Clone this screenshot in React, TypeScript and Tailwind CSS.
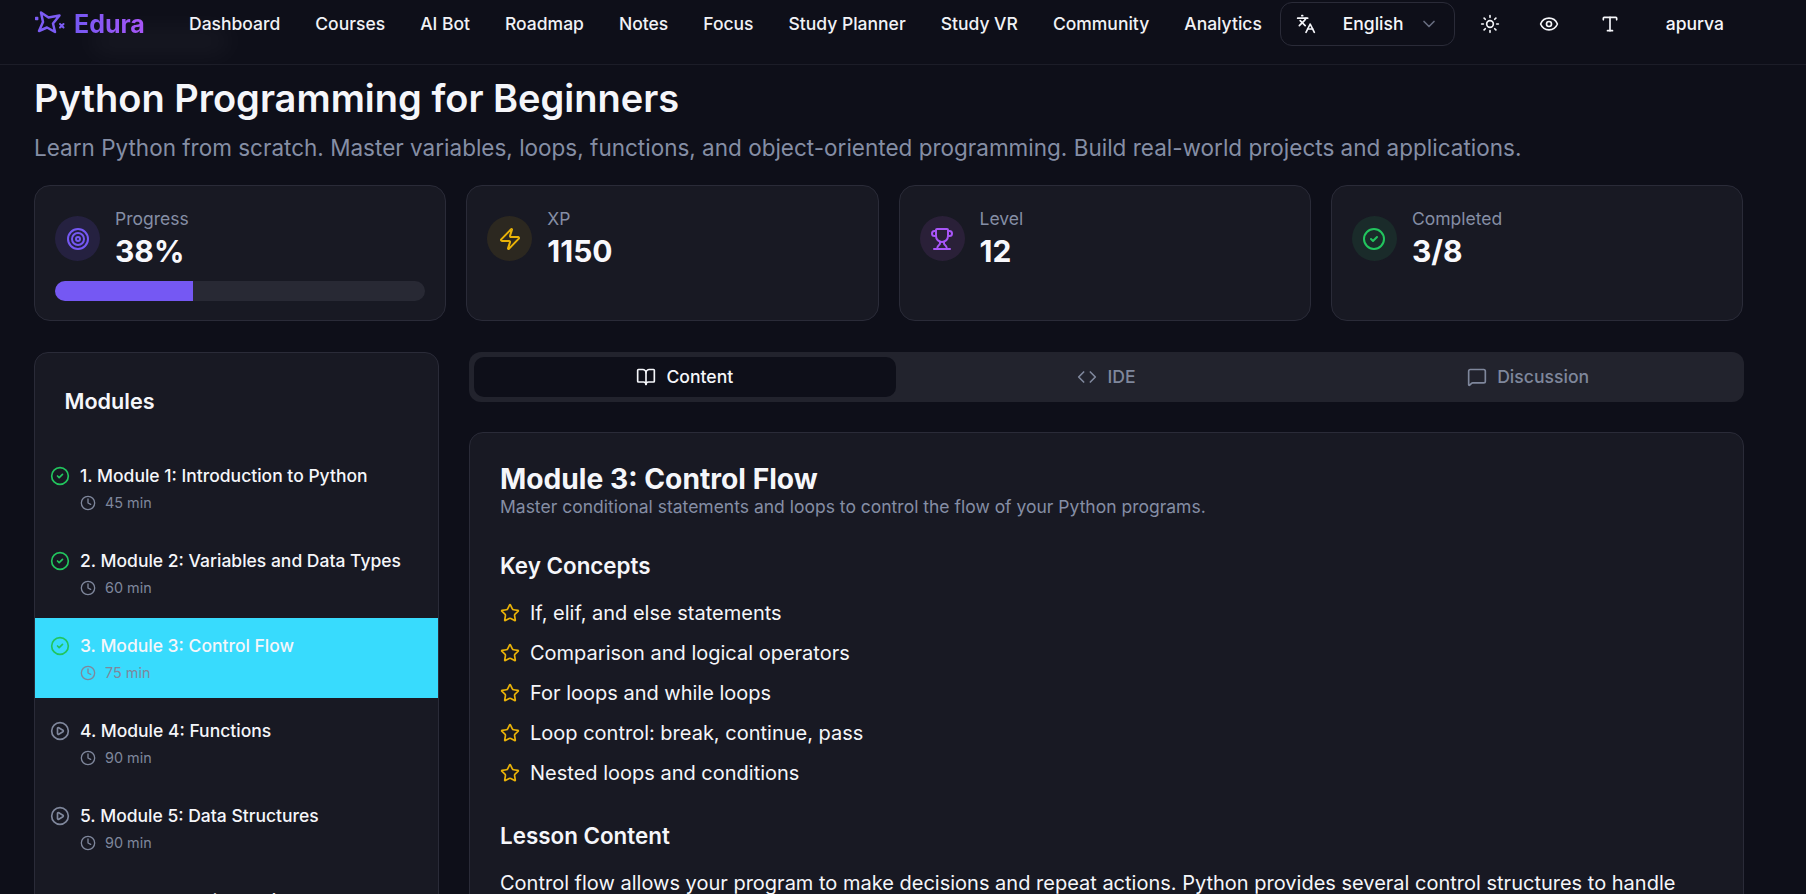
import { BookOpen, ChevronDown, CircleCheck, CirclePlay, Clock, Code, Eye, Languages, MessageSquare, Star, Sun, Target, Trophy, Type, Zap } from 'lucide-react';

const navLinks = ['Dashboard', 'Courses', 'AI Bot', 'Roadmap', 'Notes', 'Focus', 'Study Planner', 'Study VR', 'Community', 'Analytics'];

const modules = [
  { title: '1. Module 1: Introduction to Python', time: '45 min', done: true },
  { title: '2. Module 2: Variables and Data Types', time: '60 min', done: true },
  { title: '3. Module 3: Control Flow', time: '75 min', done: true, active: true },
  { title: '4. Module 4: Functions', time: '90 min' },
  { title: '5. Module 5: Data Structures', time: '90 min' },
  { title: '6. Module 6: Object-Oriented Programming', time: '120 min', long: true },
];

const concepts = [
  'If, elif, and else statements',
  'Comparison and logical operators',
  'For loops and while loops',
  'Loop control: break, continue, pass',
  'Nested loops and conditions',
];

const Logo = () => (
  <svg width="32" height="28" viewBox="0 0 32 28" fill="none" stroke="#7c5cf5" strokeWidth="2.5" strokeLinejoin="round" strokeLinecap="round">
    <path d="M7 2.5 L14.5 7.5 L25.5 5.5 L19 13.5 L21 22 L13 17.5 L5 21 L9 12 Z" />
    <rect x="1.7" y="7.5" width="2" height="2" fill="#7c5cf5" strokeWidth="1.4" />
    <path d="M26 14 L29.5 17.5 M29.5 14 L26 17.5" strokeWidth="2" />
  </svg>
);

const StatCard = ({ icon, tint, label, value, children }: { icon: React.ReactNode; tint: string; label: string; value: string; children?: React.ReactNode }) => (
  <div className="h-[136px] rounded-2xl border border-[#2a2b38] bg-[#181923] p-5">
    <div className="flex h-[65px] items-center gap-[15px]">
      <div className={`flex h-[45px] w-[45px] items-center justify-center rounded-full ${tint}`}>{icon}</div>
      <div>
        <div className="text-[17.5px] leading-[25px] text-[#858ea5]">{label}</div>
        <div className="text-[30px] font-bold leading-[40px] text-[#f8f8fc]">{value}</div>
      </div>
    </div>
    {children}
  </div>
);

export default function App() {
  return (
    <div className="relative h-screen overflow-hidden bg-[#0e0f19] font-['Inter',sans-serif] text-[#f5f6fa]">
      <div className="absolute left-[90px] top-[28px] h-[26px] w-[140px] rounded-full bg-[#ffffff0a] blur-[12px]" />
      <nav className="relative flex h-[65px] items-start justify-between border-b border-[#1c1d28] pl-[34px] pr-[82px] pt-[2px]">
        <div className="flex h-11 items-center">
          <div className="flex w-[155px] items-center gap-2">
            <Logo />
            <span className="bg-gradient-to-r from-[#7558f3] to-[#a855f7] bg-clip-text text-[25px] font-bold leading-8 text-transparent">Edura</span>
          </div>
          <div className="flex gap-[35px] text-[17.5px] font-medium text-[#f1f2f6]">
            {navLinks.map((link) => (
              <a key={link}>{link}</a>
            ))}
          </div>
        </div>
        <div className="flex h-11 items-center">
          <div className="flex h-11 w-[175px] items-center rounded-xl border border-[#2a2b38] pl-[15px] pr-[15px] text-[17.5px] font-medium">
            <Languages size={20} />
            <span className="ml-[27px] flex-1">English</span>
            <ChevronDown size={20} className="text-[#666c7e]" />
          </div>
          <Sun size={20} className="ml-[25px]" />
          <Eye size={20} className="ml-[39px]" />
          <Type size={20} className="ml-[41px]" />
          <span className="ml-[46px] text-[17.5px] font-medium">apurva</span>
        </div>
      </nav>

      <main className="relative pl-[34px] pr-[62px] pt-[13px]">
        <h1 className="text-[38px] font-semibold leading-10">Python Programming for Beginners</h1>
        <p className="mt-4 text-[22.5px] leading-7 text-[#858ea5]">
          Learn Python from scratch. Master variables, loops, functions, and object-oriented programming. Build real-world projects and applications.
        </p>

        <div className="mt-[23px] grid grid-cols-[repeat(4,412.3px)] gap-5">
          <StatCard icon={<Target size={24} className="text-[#7558f3]" />} tint="bg-[#252140]" label="Progress" value="38%">
            <div className="mt-[10px] h-5 overflow-hidden rounded-full bg-[#282934]">
              <div className="h-full w-[37.4%] bg-[#7558f3]" />
            </div>
          </StatCard>
          <StatCard icon={<Zap size={24} className="text-[#eab308]" />} tint="bg-[#2c2820]" label="XP" value="1150" />
          <StatCard icon={<Trophy size={24} className="text-[#a855f7]" />} tint="bg-[#2a2038]" label="Level" value="12" />
          <StatCard icon={<CircleCheck size={24} className="text-[#22c55e]" />} tint="bg-[#1a2b2a]" label="Completed" value="3/8" />
        </div>

        <div className="mt-[31px] flex gap-[30px]">
          <aside className="h-[800px] w-[405px] shrink-0 rounded-[14px] border border-[#2a2b38] bg-[#181923]">
            <h2 className="pl-[29.5px] pt-[34px] text-[21.6px] font-semibold leading-7">Modules</h2>
            <div className="mt-[33px] flex flex-col gap-[5px]">
              {modules.map((m) => {
                return (
                  <div key={m.title} className={`flex min-h-20 gap-[10px] pl-[15px] pr-4 pt-4 ${m.active ? 'bg-[#38dbfd]' : ''}`}>
                    <div className={`flex h-6 items-center ${m.long ? 'mt-4' : ''}`}>
                      {m.done ? <CircleCheck size={20} className="text-[#22c55e]" /> : <CirclePlay size={20} className="text-[#7f879c]" />}
                    </div>
                    <div>
                      <div className="text-[17.5px] font-medium leading-6">{m.title}</div>
                      <div className="mt-[5px] flex h-5 items-center gap-[9px] text-[14.4px] text-[#7f879c]">
                        <Clock size={16} />
                        {m.time}
                      </div>
                    </div>
                  </div>
                );
              })}
            </div>
          </aside>

          <section className="min-w-0 flex-1">
            <div className="grid h-[50px] grid-cols-3 rounded-xl bg-[#22232d] p-[5px] text-[17.6px] font-medium text-[#7f879c]">
              <div className="flex items-center justify-center gap-[10px] rounded-[10px] bg-[#0e0f19] text-[#f5f6fa]">
                <BookOpen size={20} />
                Content
              </div>
              <div className="flex items-center justify-center gap-[10px]">
                <Code size={20} />
                IDE
              </div>
              <div className="flex items-center justify-center gap-[10px]">
                <MessageSquare size={20} />
                Discussion
              </div>
            </div>

            <div className="mt-[30px] h-[800px] rounded-[14px] border border-[#2a2b38] bg-[#181923] p-[30px]">
              <h2 className="text-[28.2px] font-bold leading-8">Module 3: Control Flow</h2>
              <p className="text-[17.5px] leading-6 text-[#858ea5]">Master conditional statements and loops to control the flow of your Python programs.</p>
              <h3 className="mt-[33px] text-[22.4px] font-semibold leading-7">Key Concepts</h3>
              <ul className="mt-[19px] flex flex-col gap-3">
                {concepts.map((c) => (
                  <li key={c} className="flex items-center gap-[10px] text-[20px] leading-7">
                    <Star size={20} className="text-[#eab308]" />
                    {c}
                  </li>
                ))}
              </ul>
              <h3 className="mt-[35px] text-[22.4px] font-semibold leading-7">Lesson Content</h3>
              <p className="mt-[19px] text-[20px] leading-7">
                Control flow allows your program to make decisions and repeat actions. Python provides several control structures to handle different situations in your code.
              </p>
            </div>
          </section>
        </div>
      </main>
    </div>
  );
}
